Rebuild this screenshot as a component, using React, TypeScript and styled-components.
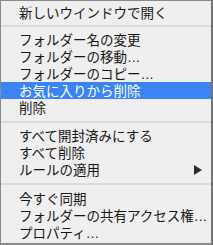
import React from "react";
import styled, { createGlobalStyle } from "styled-components";

const Global = createGlobalStyle`
  html, body { margin: 0; padding: 0; background: #efefef; }
  #root { width: 213px; height: 245px; }
`;

const Menu = styled.div`
  box-sizing: border-box;
  width: 213px;
  height: 245px;
  background: #efefef;
  border-top: 1px solid #8a8a8a;
  border-left: 1px solid #8a8a8a;
  border-right: 2px solid #747474;
  border-bottom: 2px solid #8a8a8a;
  padding: 3px 0 2px;
  display: flex;
  flex-direction: column;
  font-family: "Liberation Sans", "Noto Sans CJK JP", sans-serif;
  font-size: 13.5px;
  color: #161616;
`;

const Row = styled.div<{ $active?: boolean }>`
  height: 17px;
  line-height: 17px;
  display: flex;
  align-items: center;
  justify-content: space-between;
  padding: 1px 9px 0 18px;
  box-sizing: border-box;
  white-space: nowrap;
  background: ${(p) => (p.$active ? "#3a84f6" : "transparent")};
  color: ${(p) => (p.$active ? "#ffffff" : "#161616")};
`;

const Separator = styled.div<{ $h: number }>`
  height: ${(p) => p.$h}px;
  display: flex;
  align-items: center;
  &::after {
    content: "";
    display: block;
    width: 100%;
    height: 2px;
    background: #dadada;
  }
`;

const Arrow = () => (
  <svg width="8" height="10" viewBox="0 0 8 10">
    <polygon points="0,0 8,5 0,10" fill="#2e2e2e" />
  </svg>
);

export default function App() {
  return (
    <>
      <Global />
      <Menu>
        <Row>新しいウインドウで開く</Row>
        <Separator $h={10} />
        <Row>フォルダー名の変更</Row>
        <Row>フォルダーの移動…</Row>
        <Row>フォルダーのコピー…</Row>
        <Row $active>お気に入りから削除</Row>
        <Row>削除</Row>
        <Separator $h={11} />
        <Row>すべて開封済みにする</Row>
        <Row>すべて削除</Row>
        <Row>
          <span>ルールの適用</span>
          <Arrow />
        </Row>
        <Separator $h={12} />
        <Row>今すぐ同期</Row>
        <Row>フォルダーの共有アクセス権…</Row>
        <Row>プロパティ…</Row>
      </Menu>
    </>
  );
}
